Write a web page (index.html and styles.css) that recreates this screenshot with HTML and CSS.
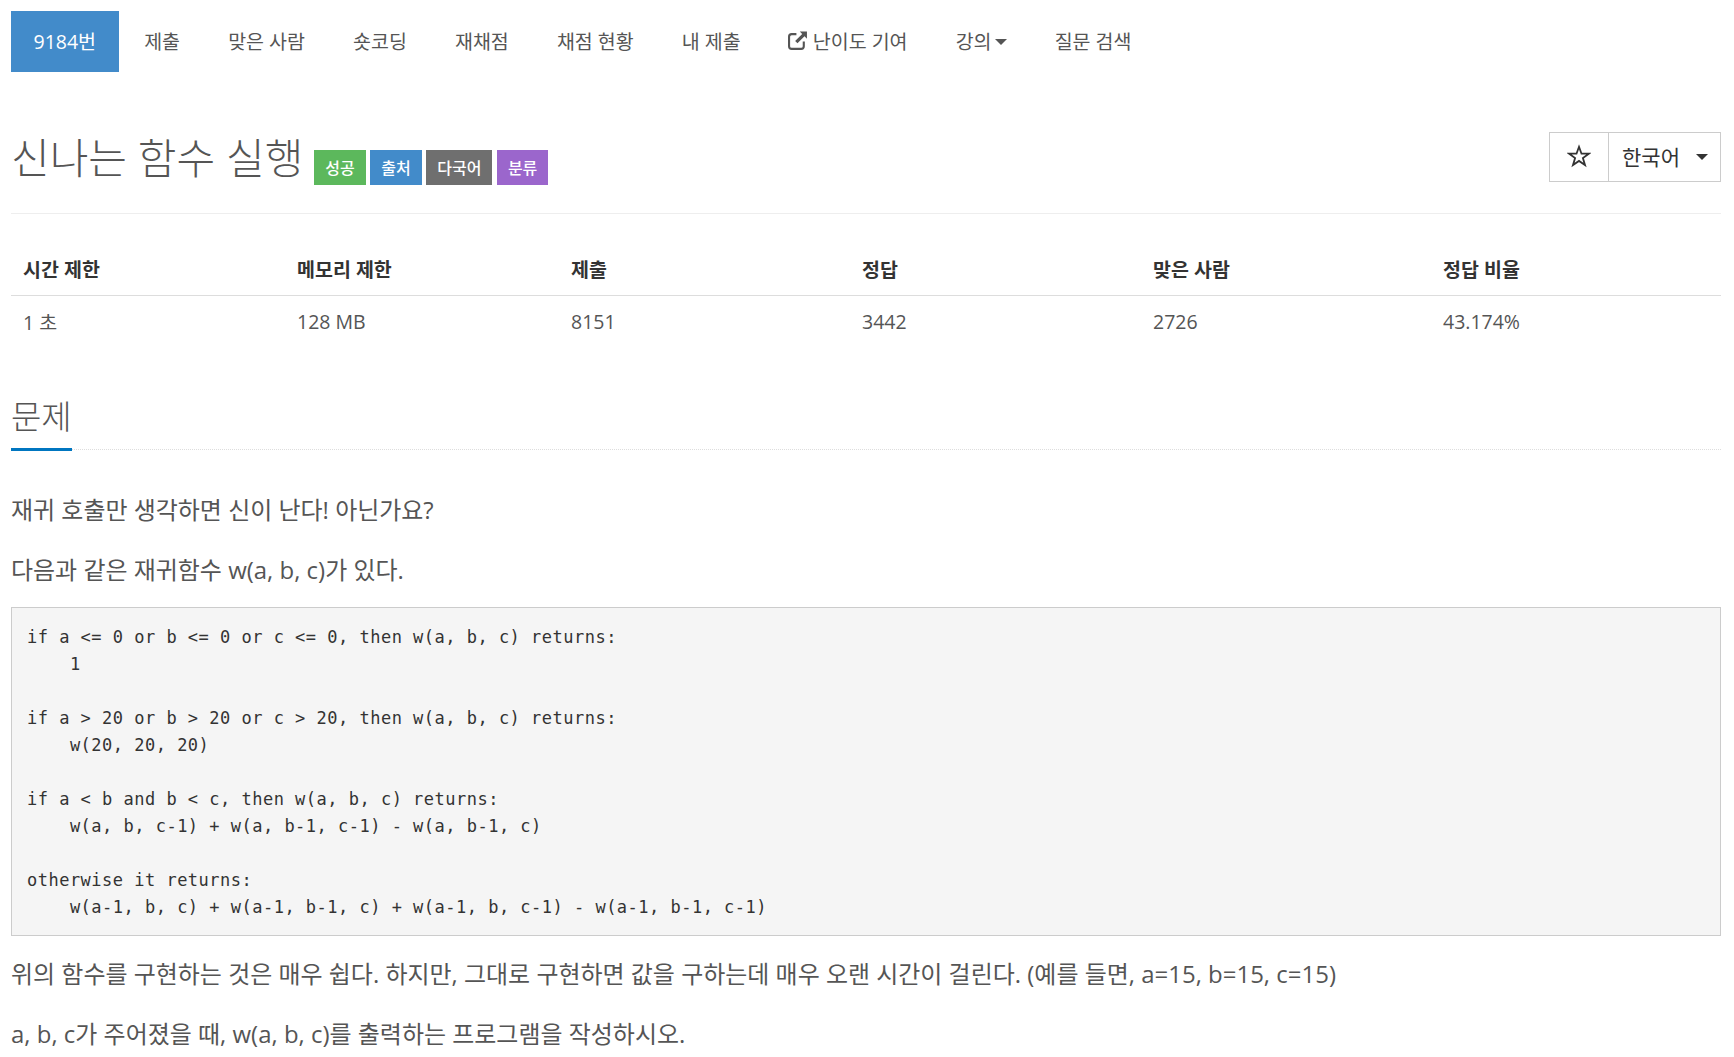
FILE: index.html
```html
<!DOCTYPE html>
<html lang="ko">
<head>
<meta charset="utf-8">
<title>신나는 함수 실행</title>
<link rel="stylesheet" href="styles.css">
</head>
<body>
<nav class="tabs">
  <a class="tab active">9184번</a>
  <a class="tab">제출</a>
  <a class="tab">맞은 사람</a>
  <a class="tab">숏코딩</a>
  <a class="tab">재채점</a>
  <a class="tab">채점 현황</a>
  <a class="tab">내 제출</a>
  <a class="tab"><svg class="ext-icon" viewBox="1 1 19 19" aria-hidden="true"><path d="M9 4H4.500A2.500 2.500 0 0 0 2 6.500V15.500A2.500 2.500 0 0 0 4.500 18H13.500A2.500 2.500 0 0 0 16 15.500V11" fill="none" stroke="currentColor" stroke-width="2"/><path d="M12.200 1.500H19V8.300L16.700 6 10 12.700 7.800 10.500 14.500 3.800Z" fill="currentColor"/></svg>난이도 기여</a>
  <a class="tab">강의<span class="caret"></span></a>
  <a class="tab">질문 검색</a>
</nav>
<header class="page-header">
  <h1 class="title">신나는 함수 실행</h1>
  <div class="labels">
    <span class="label green">성공</span>
    <span class="label blue">출처</span>
    <span class="label gray">다국어</span>
    <span class="label purple">분류</span>
  </div>
  <div class="btn-group">
    <button class="btn star-btn"><svg class="star" viewBox="0 0 24 24" aria-hidden="true"><path d="M12 2.800 14.500 9.700H21.800L15.900 14.100 18 21 12 16.900 6 21 8.100 14.100 2.200 9.700H9.500Z" fill="none" stroke="currentColor" stroke-width="1.800"/></svg></button>
    <button class="btn lang-btn">한국어<span class="caret dark"></span></button>
  </div>
</header>
<table class="stats">
  <colgroup><col class="c1"><col class="c2"><col class="c3"><col class="c4"><col class="c5"><col></colgroup>
  <thead>
    <tr><th>시간 제한</th><th>메모리 제한</th><th>제출</th><th>정답</th><th>맞은 사람</th><th>정답 비율</th></tr>
  </thead>
  <tbody>
    <tr><td>1 초</td><td>128 MB</td><td>8151</td><td>3442</td><td>2726</td><td>43.174%</td></tr>
  </tbody>
</table>
<section class="problem">
  <div class="headline"><h2>문제</h2></div>
  <div class="description">
    <p>재귀 호출만 생각하면 신이 난다! 아닌가요?</p>
    <p>다음과 같은 재귀함수 w(a, b, c)가 있다.</p>
    <pre>if a &lt;= 0 or b &lt;= 0 or c &lt;= 0, then w(a, b, c) returns:
    1

if a &gt; 20 or b &gt; 20 or c &gt; 20, then w(a, b, c) returns:
    w(20, 20, 20)

if a &lt; b and b &lt; c, then w(a, b, c) returns:
    w(a, b, c-1) + w(a, b-1, c-1) - w(a, b-1, c)

otherwise it returns:
    w(a-1, b, c) + w(a-1, b-1, c) + w(a-1, b, c-1) - w(a-1, b-1, c-1)</pre>
    <p>위의 함수를 구현하는 것은 매우 쉽다. 하지만, 그대로 구현하면 값을 구하는데 매우 오랜 시간이 걸린다. (예를 들면, a=15, b=15, c=15)</p>
    <p>a, b, c가 주어졌을 때, w(a, b, c)를 출력하는 프로그램을 작성하시오.</p>
  </div>
</section>
</body>
</html>
```

FILE: styles.css
```css
* { box-sizing: border-box; }
html, body { height: 1057px; overflow: hidden; }
body {
  margin: 0;
  padding: 11px 13px 0 11px;
  background: #fff;
  color: #333;
  font-family: "Open Sans", "Noto Sans CJK KR", sans-serif;
  font-size: 19.500px;
}
.tabs { display: flex; gap: 3.100px; height: 61px; }
.tab {
  display: flex;
  align-items: center;
  padding: 0 22.500px 2px;
  color: #555;
  white-space: nowrap;
}
.tab.active { background: #428bca; color: #fff; }
.ext-icon { width: 20px; height: 20px; margin: 0 5px 0 -1px; }
.caret {
  display: inline-block;
  margin-left: 3px;
  margin-top: 2px;
  border-top: 6px solid #555;
  border-left: 6px solid transparent;
  border-right: 6px solid transparent;
}
.caret.dark { border-top-color: #333; margin-left: 16px; }
.page-header {
  display: flex;
  align-items: flex-start;
  margin-top: 60px;
  height: 82px;
  border-bottom: 1px solid #eee;
}
.title {
  margin: 4px 0 0;
  color: #555;
  font-size: 42px;
  font-weight: 300;
  line-height: 44px;
  white-space: nowrap;
}
.labels { display: flex; gap: 4.500px; margin: 17.500px 0 0 11px; }
.label {
  display: flex;
  align-items: center;
  height: 35.500px;
  padding: 0 11px;
  color: #fff;
  font-size: 16px;
  font-weight: 500;
}
.green { background: #5cb85c; }
.blue { background: #428bca; }
.gray { background: #6f6f6f; }
.purple { background: #9b66cc; }
.btn-group { display: flex; margin: 0 0 0 auto; height: 50px; }
.btn {
  display: flex;
  align-items: center;
  background: #fff;
  border: 1px solid #ccc;
  color: #333;
  font: inherit;
  padding: 0 0 2px;
}
.star-btn { width: 60px; justify-content: center; }
.star { width: 24px; height: 24px; }
.lang-btn { width: 113px; margin-left: -1px; padding-left: 13px; font-size: 21px; }
.stats {
  width: 100%;
  table-layout: fixed;
  border-collapse: collapse;
  margin-top: 29px;
}
.c1 { width: 273px; }
.c2 { width: 274px; }
.c3, .c4 { width: 291px; }
.c5 { width: 290px; }
.stats th, .stats td { text-align: left; padding: 0 13px; }
.stats th:first-child, .stats td:first-child { padding-left: 12px; }
.stats th { height: 52px; font-weight: 700; border-bottom: 1px solid #ddd; }
.stats td { height: 52px; color: #555; }
.problem { margin-top: 27px; }
.headline { height: 76px; border-bottom: 1px dotted #ddd; position: relative; }
.headline h2 {
  display: inline-block;
  height: 77px;
  margin: 0;
  padding-top: 21px;
  color: #555;
  font-size: 33px;
  font-weight: 300;
  line-height: 44px;
  border-bottom: 3px solid #0076c0;
}
.description { color: #555; font-size: 23.970px; padding-top: 43px; }
.description p { margin: 0 0 21px; line-height: 33px; }
.description p + p { margin-top: 27px; }
pre {
  margin: 0 0 21px;
  padding: 16px 15px 14px;
  background: #f5f5f5;
  border: 1px solid #ccc;
  color: #333;
  font-family: "DejaVu Sans Mono", monospace;
  font-size: 17px;
  letter-spacing: 0.490px;
  line-height: 27px;
}
```
